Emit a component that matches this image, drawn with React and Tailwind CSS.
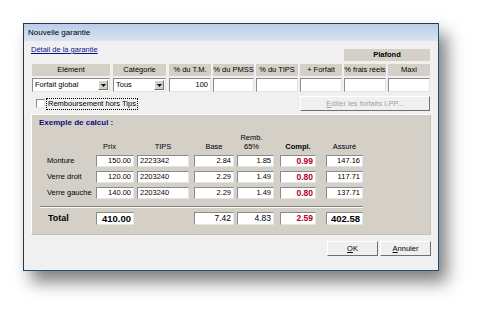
import React from 'react';

const sunk = 'bg-white border border-t-[#8a8a8a] border-l-[#8a8a8a] border-r-[#e4e4e4] border-b-[#e4e4e4]';
const raised = 'border border-t-white border-l-white border-r-[#6f6f6f] border-b-[#6f6f6f]';

function Hdr({ cls, bold, children }) {
  return (
    <div className={`${cls} h-[12px] bg-[#d4d0c8] flex items-center justify-center ${bold ? 'font-bold' : ''}`}>
      {children}
    </div>
  );
}

function Combo({ cls, text }) {
  return (
    <div className={`${sunk} ${cls} flex items-center justify-between pl-[2px] pr-[1px]`}>
      <span>{text}</span>
      <div className={`${raised} w-[10px] h-[10px] bg-[#d4d0c8] flex items-center justify-center`}>
        <svg width="5" height="3" viewBox="0 0 5 3">
          <polygon points="0,0 5,0 2.5,3" fill="#000" />
        </svg>
      </div>
    </div>
  );
}

const rows = [
  { label: 'Monture', prix: '150.00', tips: '2223342', base: '2.84', remb: '1.85', compl: '0.99', assure: '147.16' },
  { label: 'Verre droit', prix: '120.00', tips: '2203240', base: '2.29', remb: '1.49', compl: '0.80', assure: '117.71' },
  { label: 'Verre gauche', prix: '140.00', tips: '2203240', base: '2.29', remb: '1.49', compl: '0.80', assure: '137.71' },
];

export default function App() {
  return (
    <div className="w-[482px] h-[314px] bg-white pl-[23px] pt-[23px] font-['Liberation_Sans',Arial,sans-serif] text-[7.5px] leading-none text-black">
      <div className="w-[416px] h-[248px] border border-[#2a3846] border-r-[#1d4f74] border-b-[#1d4f74] shadow-[8px_11px_16px_rgba(0,0,0,0.5)] flex flex-col">
        {/* barre de titre */}
        <div className="h-[17px] bg-linear-to-b from-[#b8cee7] to-[#d8e4f1] flex items-center pl-[4px] text-[8px]">Nouvelle garantie</div>

        <div className="flex-1 bg-[#f0f0f0] pl-[8px] pr-[8px] pt-[4px] flex flex-col">
          <div className="h-[16px] flex justify-between">
            <span className="ml-[-1px] mt-[1px] self-start text-[#10108a] underline">Détail de la garantie</span>
            <Hdr cls="self-end w-[86px]" bold>Plafond</Hdr>
          </div>

          {/* en-têtes */}
          <div className="mt-[3px] h-[12px] flex">
            <Hdr cls="w-[78px]">Elément</Hdr>
            <Hdr cls="ml-[3px] w-[53px]">Catégorie</Hdr>
            <Hdr cls="ml-[3px] w-[42px]">% du T.M.</Hdr>
            <Hdr cls="ml-[2px] w-[41px]">% du PMSS</Hdr>
            <Hdr cls="ml-[2px] w-[42px]">% du TIPS</Hdr>
            <Hdr cls="ml-[2px] w-[42px]">+ Forfait</Hdr>
            <Hdr cls="ml-[2px] w-[42px]">% frais réels</Hdr>
            <Hdr cls="ml-[2px] w-[42px]">Maxi</Hdr>
          </div>

          {/* saisie */}
          <div className="mt-[2px] h-[14px] flex">
            <Combo cls="w-[78px]" text="Forfait global" />
            <Combo cls="ml-[3px] w-[53px]" text="Tous" />
            <div className={`${sunk} ml-[3px] w-[42px] flex items-center justify-end pr-[2px]`}>100</div>
            <div className={`${sunk} ml-[2px] w-[41px]`} />
            <div className={`${sunk} ml-[2px] w-[42px]`} />
            <div className={`${sunk} ml-[2px] w-[42px]`} />
            <div className={`${sunk} ml-[2px] w-[42px]`} />
            <div className={`${sunk} ml-[2px] w-[42px]`} />
          </div>

          <div className="mt-[4px] h-[15px] flex items-center">
            <div className={`${sunk} ml-[4px] w-[9px] h-[9px]`} />
            <div className="ml-[1px] h-[12px] px-[1px] border border-dotted border-black flex items-center">Remboursement hors Tips</div>
            <div className={`${raised} ml-auto w-[130px] h-[15px] bg-[#f0f0f0] flex items-center justify-center text-[#a3a3a3]`}>
              <span><u>E</u>diter les forfaits LPP...</span>
            </div>
          </div>

          {/* exemple de calcul */}
          <div className="mt-[3px] ml-[-1px] w-[400px] h-[121px] bg-[#d4d0c8] border border-t-white border-l-white border-r-[#c4c0b8] border-b-[#c4c0b8] flex flex-col">
            <div className="h-[16px] flex items-center pl-[7px] text-[8px] font-bold text-[#0c0c7e]">Exemple de calcul :</div>
            <div className="ml-[8px] flex flex-col">
              <div className="h-[21px] flex items-end pb-[1px] leading-[9px]">
                <div className="w-[56px]" />
                <div className="w-[38px] text-center pr-[11px]">Prix</div>
                <div className="ml-[3px] w-[52px] text-center">TIPS</div>
                <div className="ml-[5px] w-[40px] text-center">Base</div>
                <div className="ml-[3px] w-[37px] text-center pr-[8px]">Remb.<br />65%</div>
                <div className="ml-[6px] w-[36px] text-center font-bold">Compl.</div>
                <div className="ml-[10px] w-[37px] text-center">Assuré</div>
              </div>

              {rows.map((r, i) => (
                <div key={r.label} className={`${i === 0 ? 'mt-[3px]' : 'mt-[4px]'} h-[12px] flex`}>
                  <div className="w-[56px] pl-[7px] flex items-center">{r.label}</div>
                  <div className={`${sunk} w-[38px] flex items-center justify-end pr-[2px]`}>{r.prix}</div>
                  <div className={`${sunk} ml-[3px] w-[52px] flex items-center pl-[2px]`}>{r.tips}</div>
                  <div className={`${sunk} ml-[5px] w-[40px] flex items-center justify-end pr-[2px]`}>{r.base}</div>
                  <div className={`${sunk} ml-[3px] w-[37px] flex items-center justify-end pr-[2px]`}>{r.remb}</div>
                  <div className={`${sunk} ml-[6px] w-[36px] flex items-center justify-end pr-[2px] font-bold text-[8.5px] text-[#b0001e]`}>{r.compl}</div>
                  <div className={`${sunk} ml-[10px] w-[37px] flex items-center justify-end pr-[2px]`}>{r.assure}</div>
                </div>
              ))}

              <div className="mt-[7px] w-[323px] h-[2px] border-t border-t-[#808080] border-b border-b-white" />

              <div className="mt-[4px] h-[13px] flex">
                <div className="w-[56px] pl-[8px] flex items-center font-bold text-[9px]">Total</div>
                <div className={`${sunk} w-[38px] flex items-center justify-end pr-[2px] font-bold text-[9.5px]`}>410.00</div>
                <div className="ml-[3px] w-[52px]" />
                <div className={`${sunk} ml-[5px] w-[40px] flex items-center justify-end pr-[2px] text-[8.5px]`}>7.42</div>
                <div className={`${sunk} ml-[3px] w-[37px] flex items-center justify-end pr-[2px] text-[8.5px]`}>4.83</div>
                <div className={`${sunk} ml-[6px] w-[36px] flex items-center justify-end pr-[2px] font-bold text-[8.5px] text-[#b0001e]`}>2.59</div>
                <div className={`${sunk} ml-[10px] w-[37px] flex items-center justify-end pr-[2px] font-bold text-[9.5px]`}>402.58</div>
              </div>
            </div>
          </div>

          {/* boutons */}
          <div className="mt-[6px] mr-[-1px] h-[15px] flex justify-end">
            <div className={`${raised} w-[51px] bg-[#efefef] flex items-center justify-center`}>
              <span><u>O</u>K</span>
            </div>
            <div className={`${raised} ml-[2px] w-[51px] bg-[#efefef] flex items-center justify-center`}>
              <span><u>A</u>nnuler</span>
            </div>
          </div>
        </div>
      </div>
    </div>
  );
}
